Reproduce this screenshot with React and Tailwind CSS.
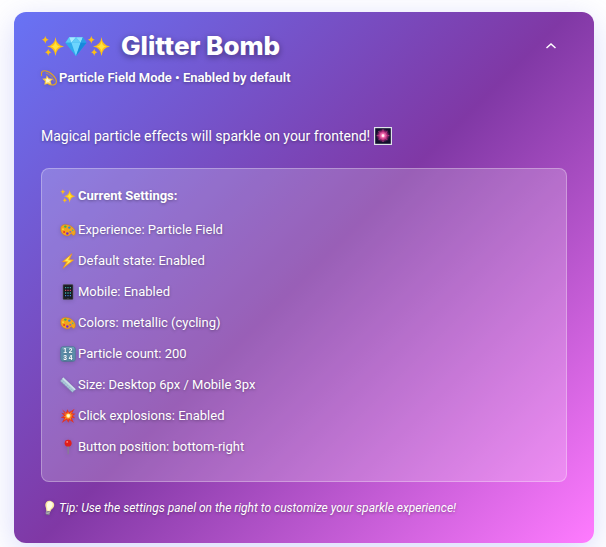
import React, { useState } from "react";

const SparklesIcon = ({ className }) => (
  <svg viewBox="0 0 24 24" className={className} aria-hidden="true">
    <path d="M14.5 3Q15.3 11.2 23 12.5Q15.3 13.8 14.5 22Q13.7 13.8 6 12.5Q13.7 11.2 14.5 3Z" fill="#fdbf16" />
    <path d="M14.5 7Q15 12 19.5 12.5Q15 13 14.5 18Q14 13 9.5 12.5Q14 12 14.5 7Z" fill="#ffe23c" />
    <path d="M4.3 1.8Q4.8 5.3 7.8 5.8Q4.8 6.3 4.3 9.8Q3.8 6.3 .8 5.8Q3.8 5.3 4.3 1.8Z" fill="#fdbf16" />
    <path d="M7.2 14.5Q7.7 17.7 10.4 18.2Q7.7 18.7 7.2 22Q6.7 18.7 4 18.2Q6.7 17.7 7.2 14.5Z" fill="#fdbf16" />
  </svg>
);

const GemIcon = ({ className }) => (
  <svg viewBox="0 0 24 24" className={className} aria-hidden="true">
    <path d="M4.5 2.5H19.5L23.5 8.500L12 23L.5 8.500Z" fill="#2fa8ee" />
    <path d="M4.5 2.5L7 8.500H.5Z" fill="#5ccbf6" />
    <path d="M4.5 2.5H12L7 8.500Z" fill="#a9eaff" />
    <path d="M12 2.5L17 8.500H7Z" fill="#62cdf8" />
    <path d="M12 2.5H19.5L17 8.500Z" fill="#8cdffc" />
    <path d="M19.5 2.5L23.5 8.500H17Z" fill="#2b9fe6" />
    <path d="M.5 8.500H7L12 23Z" fill="#2fa9ec" />
    <path d="M7 8.500H17L12 23Z" fill="#6dd5fd" />
    <path d="M17 8.500H23.5L12 23Z" fill="#1689db" />
  </svg>
);

const DizzyIcon = ({ className }) => (
  <svg viewBox="0 0 24 24" className={className} aria-hidden="true">
    <path d="M1 9C-.5 3 2 .8 6 1.200C14 2 24 12 23 18.500C22.500 22.500 17 23.500 11 21.500" fill="none" stroke="#e5a51c" strokeWidth="1.7" />
    <path d="M7 4.500C12 5.500 18 11 19.500 17" fill="none" stroke="#d9a437" strokeWidth="1" />
    <path d="M8.500 8L11.800 12.500L18 13.500L14.500 17L16 22L10.500 20.500L5 22L6 17L2 13L7.500 12.500Z" fill="#f8cb45" />
    <path d="M9 11L11 14L15 14.800L12.500 17L13.300 19.500L10.500 18.500L7 19.500L8 16.500L6 14.300L8.500 14Z" fill="#fff6cf" />
  </svg>
);

const FireworksIcon = ({ className }) => (
  <svg viewBox="0 0 24 24" className={className} aria-hidden="true">
    <defs>
      <radialGradient id="burst">
        <stop offset="0" stopColor="#ffffff" />
        <stop offset=".25" stopColor="#ff8ac0" />
        <stop offset=".6" stopColor="#d02d88" stopOpacity=".75" />
        <stop offset="1" stopColor="#6b1d70" stopOpacity="0" />
      </radialGradient>
    </defs>
    <rect x=".8" y=".8" width="22.400" height="22.400" fill="#100f2b" stroke="#dfe3ea" strokeWidth="1.6" />
    <circle cx="12" cy="11.500" r="9.500" fill="url(#burst)" />
    <path d="M12 3V20M3.500 11.500H20.500M6 5.500L18 17.500M18 5.500L6 17.500" stroke="#e8489b" strokeWidth=".9" strokeDasharray="3 .8" />
    <circle cx="12" cy="11.500" r="1.800" fill="#fff0f5" />
  </svg>
);

const PaletteIcon = ({ className }) => (
  <svg viewBox="0 0 24 24" className={className} aria-hidden="true">
    <path d="M1 10C1 4 7 2.500 13 4.500C19 6.500 24 12 23 17C22.500 20.500 19.500 21 18.300 18.800C17.500 17 16 17.500 15 19C13 22 7 21 4 18C2 16 1 13 1 10Z" fill="#f2a31e" stroke="#c67a16" strokeWidth=".6" />
    <ellipse cx="15.500" cy="14.800" rx="1.700" ry="1.300" fill="#8a62b6" />
    <circle cx="8" cy="6.900" r="1.800" fill="#3cb34a" />
    <circle cx="14" cy="8.400" r="1.800" fill="#2587e3" />
    <circle cx="4.500" cy="10.700" r="1.400" fill="#f7e034" />
    <circle cx="6.200" cy="15" r="1.500" fill="#e83327" />
    <circle cx="11" cy="17.200" r="1.900" fill="#6f22d6" />
    <circle cx="19.200" cy="12.500" r="1.200" fill="#32b9a0" />
  </svg>
);

const BoltIcon = ({ className }) => (
  <svg viewBox="0 0 24 24" className={className} aria-hidden="true">
    <path d="M18 1L3.500 13L10 13.500L4.500 23L20.500 10.500L14 9.800Z" fill="#ffc526" stroke="#ee9018" strokeWidth=".9" />
    <path d="M14.500 5L7.500 11.500L13 12L10 17L16.500 11.500L11.500 11Z" fill="#fff06a" />
  </svg>
);

const PhoneIcon = ({ className }) => (
  <svg viewBox="0 0 24 24" className={className} aria-hidden="true">
    <rect x="4.500" y=".6" width="15" height="22.800" rx="1.500" fill="#202126" stroke="#55565d" strokeWidth=".8" />
    <rect x="6.500" y="3.500" width="11" height="16.500" fill="#151820" />
    <path d="M7.500 5.500H16.500M7.500 13.500H16.500" stroke="#3fae9f" strokeWidth="2" strokeDasharray="1.800 1.800" />
    <path d="M7.500 9.500H16.500" stroke="#d0505f" strokeWidth="2" strokeDasharray="1.800 1.800" />
    <path d="M7.500 17.500H16.500" stroke="#4682dd" strokeWidth="2" strokeDasharray="1.800 1.800" />
    <circle cx="12" cy="21.700" r=".7" fill="#70727a" />
  </svg>
);

const NumbersIcon = ({ className }) => (
  <svg viewBox="0 0 24 24" className={className} aria-hidden="true">
    <rect x="1" y="1" width="22" height="22" rx="3.500" fill="#5e91ad" stroke="#477891" />
    <path d="M3 3Q12 1.500 21 3" fill="none" stroke="#8ab5c8" />
    <g fill="#fff" fontFamily="Liberation Sans, sans-serif" fontWeight="700" fontSize="10">
      <text x="5" y="11">1</text>
      <text x="13" y="11">2</text>
      <text x="5" y="20.500">3</text>
      <text x="13" y="20.500">4</text>
    </g>
  </svg>
);

const RulerIcon = ({ className }) => (
  <svg viewBox="0 0 24 24" className={className} aria-hidden="true">
    <path d="M5 .8L23.500 18.500L18.500 23L.5 6Z" fill="#a9c5d8" stroke="#7d9db6" strokeWidth=".8" />
    <path d="M5 .8L23.500 18.500L21.800 20L3.300 2.600Z" fill="#cfe0e9" />
    <path d="M3.500 8.500L5 7M6.500 11.500L8 10M9.500 14.500L11 13M12.500 17.300L14 15.800M15.500 20L17 18.500" stroke="#7090a8" strokeWidth=".8" />
  </svg>
);

const CollisionIcon = ({ className }) => (
  <svg viewBox="0 0 24 24" className={className} aria-hidden="true">
    <path d="M3 2L9 7L11 2L13.500 6.500L22 1L18 8L23.500 8.500L19 11.500L23 15.500L17.500 15L21 22.500L14.500 18L12.500 22L10 17.500L2.500 22.500L6.500 15.500L1 14.500L6 11.500L2 7L7.500 8.500Z" fill="#e43220" />
    <path d="M6.500 5.500L10.500 8.500L12 5.500L14 8.500L18 5L16.500 9.500L20 10L17 12L19 14.500L16 14L17 18.500L13.500 15.500L12 18L10.500 15.500L6 18.500L8.500 14L5 13L8.500 11.500L6 8.800L9.500 10Z" fill="#fb8a20" />
    <circle cx="12.500" cy="11.800" r="3.200" fill="#ffe87a" />
    <circle cx="12.500" cy="11.800" r="2" fill="#fffbe0" />
  </svg>
);

const PinIcon = ({ className }) => (
  <svg viewBox="0 0 24 24" className={className} aria-hidden="true">
    <path d="M10.800 9H13.600L13 23H11.500Z" fill="#85808f" />
    <circle cx="12.200" cy="6.200" r="5.200" fill="#e01e1b" />
    <circle cx="10.800" cy="4.400" r="1.400" fill="#ff8a7c" />
  </svg>
);

const BulbIcon = ({ className }) => (
  <svg viewBox="0 0 24 24" className={className} aria-hidden="true">
    <g transform="rotate(14 12 12)">
      <path d="M12 1C7 1 4.500 5 5.500 9C6.300 12 8.500 13 8.800 17H15.200C15.500 13 17.700 12 18.500 9C19.500 5 17 1 12 1Z" fill="#f8e7a0" />
      <path d="M12 2.500C8.500 2.500 7 5.500 8 9C8.500 11.500 10.500 12.500 10.500 16H13.500C13.500 12.500 15.500 11.500 16 9C17 5.500 15.500 2.500 12 2.500Z" fill="#fffbe4" />
      <path d="M9 17H15V21L13.500 23H10.500L9 21Z" fill="#777582" />
      <path d="M9 18.500H15M9 20.500H15" stroke="#c5c3ca" />
    </g>
  </svg>
);

const settings = [
  { icon: PaletteIcon, label: "Experience", value: "Particle Field" },
  { icon: BoltIcon, label: "Default state", value: "Enabled" },
  { icon: PhoneIcon, label: "Mobile", value: "Enabled" },
  { icon: PaletteIcon, label: "Colors", value: "metallic (cycling)" },
  { icon: NumbersIcon, label: "Particle count", value: "200" },
  { icon: RulerIcon, label: "Size", value: "Desktop 6px / Mobile 3px" },
  { icon: CollisionIcon, label: "Click explosions", value: "Enabled" },
  { icon: PinIcon, label: "Button position", value: "bottom-right" },
];

const App = () => {
  const [open, setOpen] = useState(true);

  return (
    <main className="bg-white pt-3 pr-3 pb-1 pl-[14px] font-['Roboto',sans-serif] text-white">
      <section className="rounded-xl bg-[linear-gradient(135deg,#6873f5_0%,#8038a5_50%,#ff7bff_100%)] px-[27px] pt-4 pb-[25px] shadow-[0_8px_32px_rgba(99,102,241,0.25)] [text-shadow:0_1px_3px_rgba(0,0,0,0.35)]">
        {/* Header */}
        <header className="flex items-start justify-between">
          <div>
            <h1 className="flex items-center font-['Inter',sans-serif] text-[26px] leading-9 font-extrabold [text-shadow:0_2px_6px_rgba(0,0,0,0.4)]">
              <span className="mr-[10px] flex items-center">
                <SparklesIcon className="size-6" />
                <GemIcon className="size-[22px]" />
                <SparklesIcon className="size-6" />
              </span>
              Glitter Bomb
            </h1>
            <p className="mt-1 flex items-center text-[13px] leading-5 font-semibold">
              <DizzyIcon className="mr-[2px] size-4 drop-shadow-sm" />
              Particle Field Mode • Enabled by default
            </p>
          </div>
          <button
            type="button"
            aria-label="Toggle details"
            aria-expanded={open}
            onClick={() => setOpen(!open)}
            className="mt-0.5 flex size-8 cursor-pointer items-center justify-center"
          >
            <svg viewBox="0 0 12 8" className="h-2 w-3" fill="none" stroke="#fff" strokeWidth="1.5">
              <path d={open ? "M1.500 6L6 2L10.500 6" : "M1.500 2L6 6L10.500 2"} />
            </svg>
          </button>
        </header>

        {open && (
          <div>
            <p className="mt-9 flex items-center text-sm leading-6">
              Magical particle effects will sparkle on your frontend!
              <FireworksIcon className="ml-1 size-[18px]" />
            </p>

            {/* Current settings */}
            <div className="mt-5 rounded-lg border border-white/30 bg-white/20 px-[18px] pt-4 pb-6">
              <h2 className="flex items-center text-[13px] leading-[21px] font-bold">
                <SparklesIcon className="mr-[2px] size-4" />
                Current Settings:
              </h2>
              <ul className="mt-[13px] flex flex-col gap-[10px] text-[13px] leading-[21px]">
                {settings.map(({ icon: Icon, label, value }) => (
                  <li key={label} className="flex items-center">
                    <Icon className="mr-[2px] size-4 drop-shadow-sm" />
                    {label}: {value}
                  </li>
                ))}
              </ul>
            </div>

            <p className="mt-4 flex items-center text-xs leading-5 italic">
              <BulbIcon className="mr-[2px] size-4 drop-shadow-sm" />
              Tip: Use the settings panel on the right to customize your sparkle experience!
            </p>
          </div>
        )}
      </section>
    </main>
  );
};

export default App;
